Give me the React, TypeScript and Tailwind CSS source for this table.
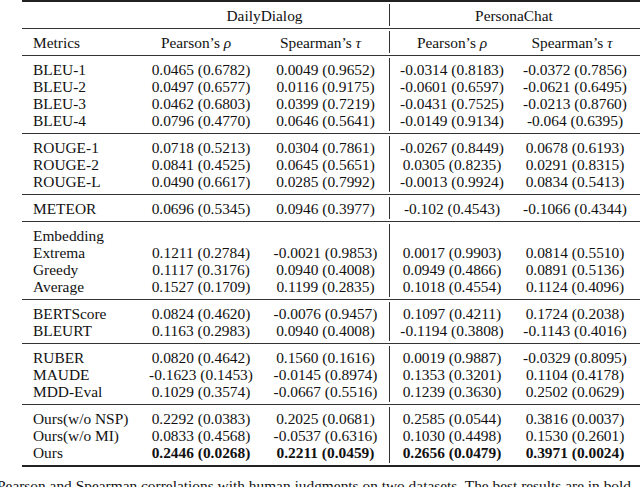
import React from "react";

type Row = {
  metric: string;
  values?: [string, string, string, string];
  bold?: boolean;
};

const groups: Row[][] = [
  [
    { metric: "BLEU-1", values: ["0.0465 (0.6782)", "0.0049 (0.9652)", "-0.0314 (0.8183)", "-0.0372 (0.7856)"] },
    { metric: "BLEU-2", values: ["0.0497 (0.6577)", "0.0116 (0.9175)", "-0.0601 (0.6597)", "-0.0621 (0.6495)"] },
    { metric: "BLEU-3", values: ["0.0462 (0.6803)", "0.0399 (0.7219)", "-0.0431 (0.7525)", "-0.0213 (0.8760)"] },
    { metric: "BLEU-4", values: ["0.0796 (0.4770)", "0.0646 (0.5641)", "-0.0149 (0.9134)", "-0.064 (0.6395)"] },
  ],
  [
    { metric: "ROUGE-1", values: ["0.0718 (0.5213)", "0.0304 (0.7861)", "-0.0267 (0.8449)", "0.0678 (0.6193)"] },
    { metric: "ROUGE-2", values: ["0.0841 (0.4525)", "0.0645 (0.5651)", "0.0305 (0.8235)", "0.0291 (0.8315)"] },
    { metric: "ROUGE-L", values: ["0.0490 (0.6617)", "0.0285 (0.7992)", "-0.0013 (0.9924)", "0.0834 (0.5413)"] },
  ],
  [
    { metric: "METEOR", values: ["0.0696 (0.5345)", "0.0946 (0.3977)", "-0.102 (0.4543)", "-0.1066 (0.4344)"] },
  ],
  [
    { metric: "Embedding" },
    { metric: "Extrema", values: ["0.1211 (0.2784)", "-0.0021 (0.9853)", "0.0017 (0.9903)", "0.0814 (0.5510)"] },
    { metric: "Greedy", values: ["0.1117 (0.3176)", "0.0940 (0.4008)", "0.0949 (0.4866)", "0.0891 (0.5136)"] },
    { metric: "Average", values: ["0.1527 (0.1709)", "0.1199 (0.2835)", "0.1018 (0.4554)", "0.1124 (0.4096)"] },
  ],
  [
    { metric: "BERTScore", values: ["0.0824 (0.4620)", "-0.0076 (0.9457)", "0.1097 (0.4211)", "0.1724 (0.2038)"] },
    { metric: "BLEURT", values: ["0.1163 (0.2983)", "0.0940 (0.4008)", "-0.1194 (0.3808)", "-0.1143 (0.4016)"] },
  ],
  [
    { metric: "RUBER", values: ["0.0820 (0.4642)", "0.1560 (0.1616)", "0.0019 (0.9887)", "-0.0329 (0.8095)"] },
    { metric: "MAUDE", values: ["-0.1623 (0.1453)", "-0.0145 (0.8974)", "0.1353 (0.3201)", "0.1104 (0.4178)"] },
    { metric: "MDD-Eval", values: ["0.1029 (0.3574)", "-0.0667 (0.5516)", "0.1239 (0.3630)", "0.2502 (0.0629)"] },
  ],
  [
    { metric: "Ours(w/o NSP)", values: ["0.2292 (0.0383)", "0.2025 (0.0681)", "0.2585 (0.0544)", "0.3816 (0.0037)"] },
    { metric: "Ours(w/o MI)", values: ["0.0833 (0.4568)", "-0.0537 (0.6316)", "0.1030 (0.4498)", "0.1530 (0.2601)"] },
    { metric: "Ours", values: ["0.2446 (0.0268)", "0.2211 (0.0459)", "0.2656 (0.0479)", "0.3971 (0.0024)"], bold: true },
  ],
];

function Rule({ thick }: { thick?: boolean }) {
  return <div className={thick ? "h-[2px] bg-[#222]" : "h-px bg-[#333]"} />;
}

function Group({
  left,
  right,
}: {
  left: React.ReactNode;
  right: React.ReactNode;
}) {
  return (
    <div className="flex py-[2px]">
      <div className="w-[367px] py-[2.5px]">{left}</div>
      <div className="w-[251px] border-l border-[#333] py-[2.5px]">{right}</div>
    </div>
  );
}

const Rho = () => <span className="italic">ρ</span>;
const Tau = () => <span className="italic">τ</span>;

export default function App() {
  return (
    <div
      className="w-[640px] h-[487px] overflow-hidden bg-white text-[#111] text-[15.4px] leading-[17px]"
      style={{ fontFamily: '"Liberation Serif", "Times New Roman", serif' }}
    >
      <div className="ml-[22px] w-[618px]">
        <Rule thick />
        <Group
          left={
            <div className="flex h-[17px]">
              <div className="w-[118px]" />
              <div className="w-[249px] text-center">DailyDialog</div>
            </div>
          }
          right={
            <div className="h-[17px] pr-[2px] text-center">PersonaChat</div>
          }
        />
        <Rule />
        <Group
          left={
            <div className="flex h-[17px]">
              <div className="w-[118px] pl-[11px]">Metrics</div>
              <div className="w-[112px] text-center">
                Pearson’s <Rho />
              </div>
              <div className="w-[137px] text-center">
                Spearman’s <Tau />
              </div>
            </div>
          }
          right={
            <div className="flex h-[17px]">
              <div className="w-[124px] text-center">
                Pearson’s <Rho />
              </div>
              <div className="w-[116px] text-center">
                Spearman’s <Tau />
              </div>
            </div>
          }
        />
        {groups.map((rows, gi) => (
          <React.Fragment key={gi}>
            <Rule />
            <Group
              left={rows.map((r) => (
                <div
                  key={r.metric}
                  className="flex h-[17px] whitespace-nowrap"
                >
                  <div className="w-[118px] pl-[11px]">{r.metric}</div>
                  <div
                    className={`w-[122px] text-center ${r.bold ? "font-bold" : ""}`}
                  >
                    {r.values?.[0]}
                  </div>
                  <div
                    className={`w-[127px] text-center ${r.bold ? "font-bold" : ""}`}
                  >
                    {r.values?.[1]}
                  </div>
                </div>
              ))}
              right={rows.map((r) => (
                <div
                  key={r.metric}
                  className="flex h-[17px] whitespace-nowrap"
                >
                  <div
                    className={`w-[124px] text-center ${r.bold ? "font-bold" : ""}`}
                  >
                    {r.values?.[2]}
                  </div>
                  <div
                    className={`w-[122px] text-center ${r.bold ? "font-bold" : ""}`}
                  >
                    {r.values?.[3]}
                  </div>
                </div>
              ))}
            />
          </React.Fragment>
        ))}
        <Rule thick />
      </div>
      <p className="ml-[-3px] mt-[10px] whitespace-nowrap">
        Pearson and Spearman correlations with human judgments on two
        datasets. The best results are in bold.
      </p>
    </div>
  );
}
